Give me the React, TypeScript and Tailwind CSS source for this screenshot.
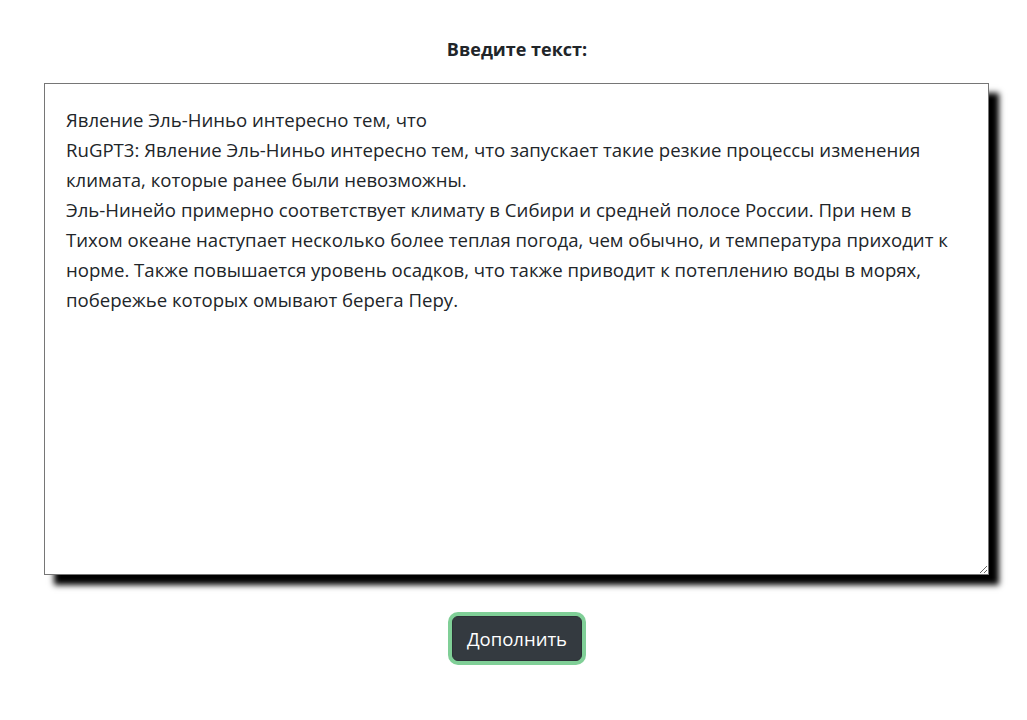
import { useState } from "react";

const initialText = `Явление Эль-Ниньо интересно тем, что
RuGPT3: Явление Эль-Ниньо интересно тем, что запускает такие резкие процессы изменения климата, которые ранее были невозможны.
Эль-Нинейо примерно соответствует климату в Сибири и средней полосе России. При нем в Тихом океане наступает несколько более теплая погода, чем обычно, и температура приходит к норме. Также повышается уровень осадков, что также приводит к потеплению воды в морях, побережье которых омывают берега Перу.`;

export default function App() {
  const [text, setText] = useState(initialText);

  return (
    <div className="min-h-screen bg-white font-['Open_Sans',sans-serif] text-[#212529]">
      <div className="flex flex-col items-center pt-[37px] pl-[7px]">
        <label htmlFor="prompt" className="text-[18px] font-bold leading-[24px]">
          Введите текст:
        </label>
        <div className="mt-[22px] self-start ml-[37px]">
          <textarea
            id="prompt"
            value={text}
            onChange={(e) => setText(e.target.value)}
            className="block w-[945px] h-[492px] border border-[#767676] bg-white px-[21px] py-[21px] text-[18.6px] leading-[30px] text-[#212529] shadow-[10px_10px_6px_#000] outline-none"
          />
        </div>
        <button
          type="button"
          className="mt-[41px] rounded-[6px] border border-[#2c3136] bg-[#343a40] px-[14px] py-[8px] text-[18.5px] leading-[27px] text-white ring-4 ring-[#80cf97]"
        >
          Дополнить
        </button>
      </div>
    </div>
  );
}
